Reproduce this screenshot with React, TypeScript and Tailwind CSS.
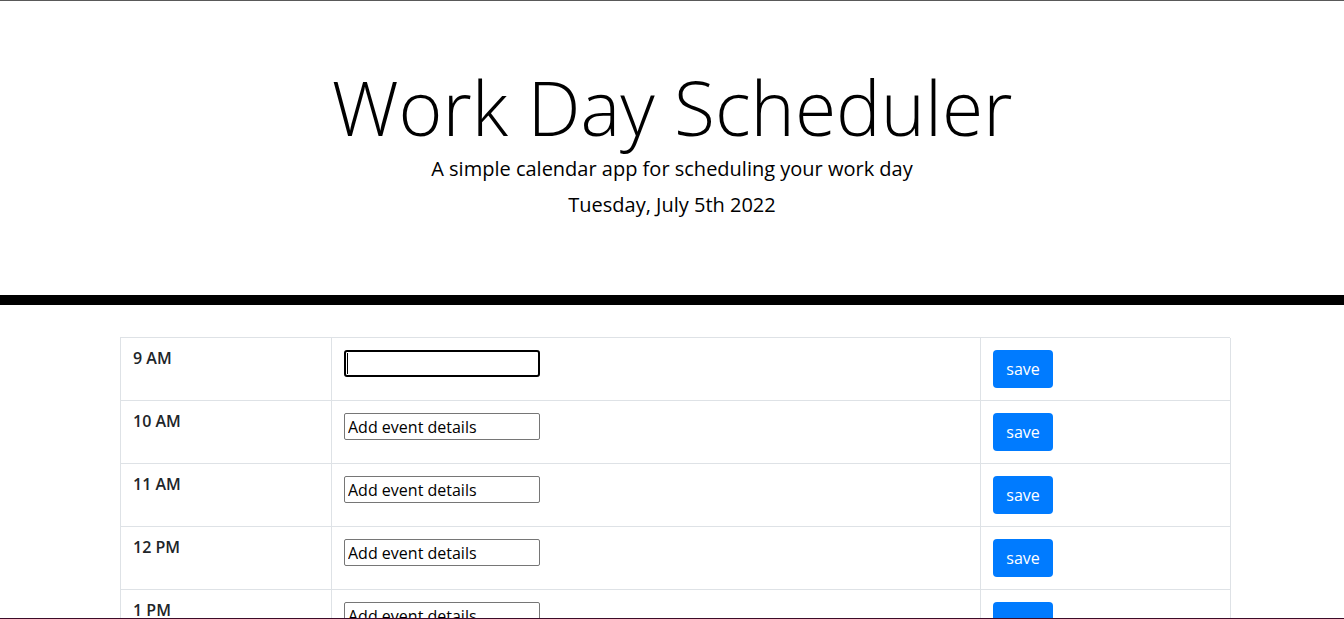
import React from "react";

const hours = ["9 AM", "10 AM", "11 AM", "12 PM", "1 PM", "2 PM", "3 PM", "4 PM", "5 PM"];

export default function App() {
  return (
    <div
      className="min-h-screen bg-white text-black border-t border-[#595959]"
      style={{ fontFamily: '"Open Sans", "Liberation Sans", sans-serif' }}
    >
      <header className="text-center pt-16 pb-[75px] border-b-[10px] border-black">
        <h1 className="text-[75px] leading-[84px] font-light">Work Day Scheduler</h1>
        <p className="mt-[5px] text-[20px] leading-[30px]">A simple calendar app for scheduling your work day</p>
        <p className="mt-[6px] text-[20px] leading-[30px]">Tuesday, July 5th 2022</p>
      </header>

      <main className="mt-8 ml-[120px] w-[1110px]">
        <div className="border-t border-l border-[#dee2e6]">
          {hours.map((h, i) => (
            <div key={h} className="grid grid-cols-[211px_649px_250px] h-[63px]">
              <div className="border-r border-b border-[#dee2e6] pl-3 pt-2 text-[16px] leading-6 font-semibold text-[#212529]">
                {h}
              </div>
              <div className="border-r border-b border-[#dee2e6] pl-3 pt-3">
                {i === 0 ? (
                  <div className="relative w-[196px] h-[27px] border-2 border-black rounded-[3px]">
                    <span className="absolute left-[1px] top-[1px] w-px h-[21px] bg-black" />
                  </div>
                ) : (
                  <input
                    defaultValue="Add event details"
                    className="block w-[196px] h-[27px] border border-[#767676] rounded-[2px] px-[3px] text-[16px] text-black outline-none"
                    style={{ fontFamily: '"Open Sans", "Liberation Sans", sans-serif' }}
                  />
                )}
              </div>
              <div className="border-r border-b border-[#dee2e6] pl-3 pt-3">
                <button className="w-[60px] h-[38px] rounded-[4px] bg-[#007bff] text-white text-[16px] leading-6">
                  save
                </button>
              </div>
            </div>
          ))}
        </div>
      </main>

      <div className="fixed left-0 right-0 bottom-0 h-px bg-[#3d0b28]" />
    </div>
  );
}
